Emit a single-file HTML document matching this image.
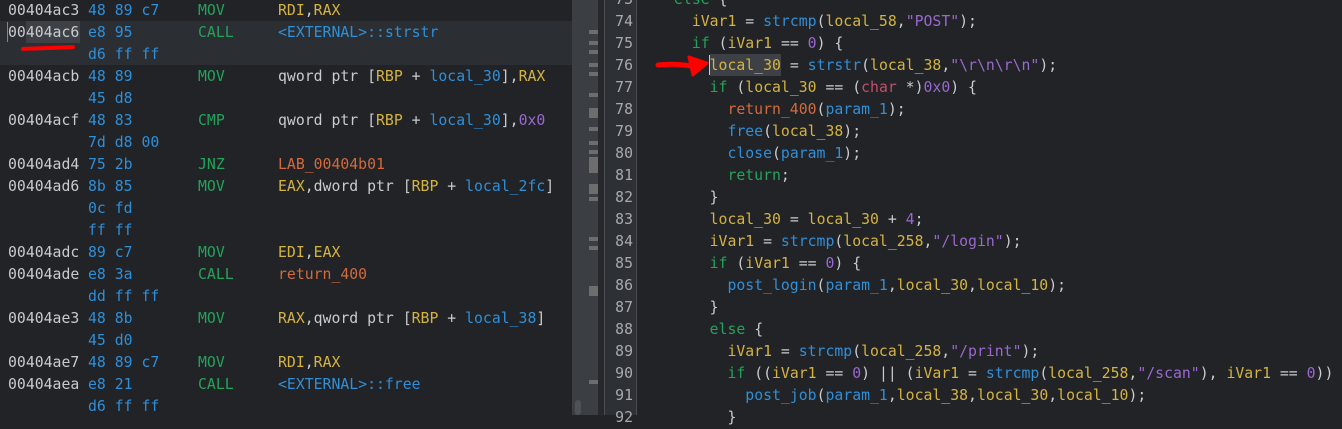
<!DOCTYPE html><html><head><style>
body{margin:0;width:1342px;height:415px;background:#212327;overflow:hidden;position:relative;font-family:"DejaVu Sans Mono","Liberation Mono",monospace;font-size:14.8px;color:#c9cbcf}
.a{position:absolute;white-space:pre;line-height:22px;margin-top:1px}
.by{color:#2f8fd8}.mn{color:#23a35a}.y{color:#d5b33f}.b{color:#2f8fd8}.p{color:#9a68d0}.k{color:#23a35a}.r{color:#c24f6b}.o{color:#d36a3c}
</style></head><body>
<div style="position:absolute;left:0;top:21px;width:572px;height:44px;background:#2b2e33"></div>
<div style="position:absolute;left:26px;top:21px;width:54px;height:22px;background:#3d4146"></div>
<div style="position:absolute;left:7px;top:22px;width:1px;height:20px;background:#888"></div>
<div style="position:absolute;left:572px;top:0;width:26px;height:415px;background:#3b3e42"></div>
<div style="position:absolute;left:598px;top:0;width:6px;height:415px;background:#26282c"></div>
<div style="position:absolute;left:604px;top:0;width:33px;height:415px;background:#2d3035;border-left:1px solid #4a4d52;border-right:1px solid #4a4d52;box-sizing:border-box"></div>
<div style="position:absolute;left:589px;top:30px;width:9px;height:4px;background:#6d6d6d;box-shadow:0 11px #6d6d6d,0 20px #6d6d6d,0 33px #6d6d6d,0 42px #6d6d6d,0 63px #6d6d6d,0 97px #6d6d6d,0 111px #6d6d6d,0 120px #6d6d6d,0 167px #6d6d6d,0 207px #6d6d6d,0 216px #6d6d6d,0 350px #6d6d6d"></div>
<div style="position:absolute;left:589px;top:108px;width:9px;height:10px;background:#6d6d6d"></div>
<div style="position:absolute;left:589px;top:157px;width:9px;height:16px;background:#6d6d6d"></div>
<div style="position:absolute;left:589px;top:184px;width:9px;height:10px;background:#6d6d6d"></div>
<div style="position:absolute;left:589px;top:286px;width:9px;height:10px;background:#6d6d6d"></div>
<div style="position:absolute;left:575px;top:400px;width:6px;height:15px;background:#4e5156;border-radius:3px"></div>
<div style="position:absolute;left:710px;top:54px;width:71px;height:22px;background:#3d4146"></div>
<div style="position:absolute;left:709px;top:55px;width:1px;height:20px;background:#ccc"></div>
<div class="a" style="left:8px;top:-1px">00404ac3</div>
<div class="a" style="left:8px;top:21px">00404ac6</div>
<div class="a" style="left:8px;top:65px">00404acb</div>
<div class="a" style="left:8px;top:109px">00404acf</div>
<div class="a" style="left:8px;top:153px">00404ad4</div>
<div class="a" style="left:8px;top:175px">00404ad6</div>
<div class="a" style="left:8px;top:241px">00404adc</div>
<div class="a" style="left:8px;top:263px">00404ade</div>
<div class="a" style="left:8px;top:307px">00404ae3</div>
<div class="a" style="left:8px;top:351px">00404ae7</div>
<div class="a" style="left:8px;top:373px">00404aea</div>
<div class="a by" style="left:88px;top:-1px">48 89 c7
e8 95
d6 ff ff
48 89
45 d8
48 83
7d d8 00
75 2b
8b 85
0c fd
ff ff
89 c7
e8 3a
dd ff ff
48 8b
45 d0
48 89 c7
e8 21
d6 ff ff</div>
<div class="a mn" style="left:198px;top:-1px">MOV
CALL

MOV

CMP

JNZ
MOV


MOV
CALL

MOV

MOV
CALL</div>
<div class="a" style="left:278px;top:-1px"><span class="y">RDI</span>,<span class="y">RAX</span>
<span class="b">&lt;EXTERNAL&gt;::strstr</span>

qword ptr [<span class="y">RBP</span> + <span class="b">local_30</span>],<span class="y">RAX</span>

qword ptr [<span class="y">RBP</span> + <span class="b">local_30</span>],<span class="p">0x0</span>

<span class="o">LAB_00404b01</span>
<span class="y">EAX</span>,dword ptr [<span class="y">RBP</span> + <span class="b">local_2fc</span>]


<span class="y">EDI</span>,<span class="y">EAX</span>
<span class="o">return_400</span>

<span class="y">RAX</span>,qword ptr [<span class="y">RBP</span> + <span class="b">local_38</span>]

<span class="y">RDI</span>,<span class="y">RAX</span>
<span class="b">&lt;EXTERNAL&gt;::free</span>
</div>
<div style="position:absolute;left:21px;top:46px;width:54px;height:4px;background:#f00;border-radius:3px;transform:rotate(-2deg)"></div>
<div class="a" style="left:604px;top:-12px;width:29px;text-align:right;color:#a8aaad">73
74
75
76
77
78
79
80
81
82
83
84
85
86
87
88
89
90
91
92</div>
<div class="a" style="left:674px;top:-12px"><span class="k">else</span> {
  <span class="y">iVar1</span> = <span class="b">strcmp</span>(<span class="y">local_58</span>,<span class="p">"POST"</span>);
  <span class="k">if</span> (<span class="y">iVar1</span> == <span class="p">0</span>) {
    <span class="y">local_30</span> = <span class="b">strstr</span>(<span class="y">local_38</span>,<span class="p">"\r\n\r\n"</span>);
    <span class="k">if</span> (<span class="y">local_30</span> == (<span class="r">char</span> *)<span class="p">0x0</span>) {
      <span class="o">return_400</span>(<span class="b">param_1</span>);
      <span class="b">free</span>(<span class="y">local_38</span>);
      <span class="b">close</span>(<span class="b">param_1</span>);
      <span class="k">return</span>;
    }
    <span class="y">local_30</span> = <span class="y">local_30</span> + <span class="p">4</span>;
    <span class="y">iVar1</span> = <span class="b">strcmp</span>(<span class="y">local_258</span>,<span class="p">"/login"</span>);
    <span class="k">if</span> (<span class="y">iVar1</span> == <span class="p">0</span>) {
      <span class="b">post_login</span>(<span class="b">param_1</span>,<span class="y">local_30</span>,<span class="y">local_10</span>);
    }
    <span class="k">else</span> {
      <span class="y">iVar1</span> = <span class="b">strcmp</span>(<span class="y">local_258</span>,<span class="p">"/print"</span>);
      <span class="k">if</span> ((<span class="y">iVar1</span> == <span class="p">0</span>) || (<span class="y">iVar1</span> = <span class="b">strcmp</span>(<span class="y">local_258</span>,<span class="p">"/scan"</span>), <span class="y">iVar1</span> == <span class="p">0</span>))
        <span class="b">post_job</span>(<span class="b">param_1</span>,<span class="y">local_38</span>,<span class="y">local_30</span>,<span class="y">local_10</span>);
      }</div>
<svg style="position:absolute;left:655px;top:54px" width="56" height="26"><path d="M3 11 Q20 9 36 12" stroke="#f00" stroke-width="5" fill="none" stroke-linecap="round"/><path d="M34 3 L52 9 L38 21 Z" fill="#f00" stroke="#f00" stroke-width="3" stroke-linejoin="round"/></svg>
</body></html>
